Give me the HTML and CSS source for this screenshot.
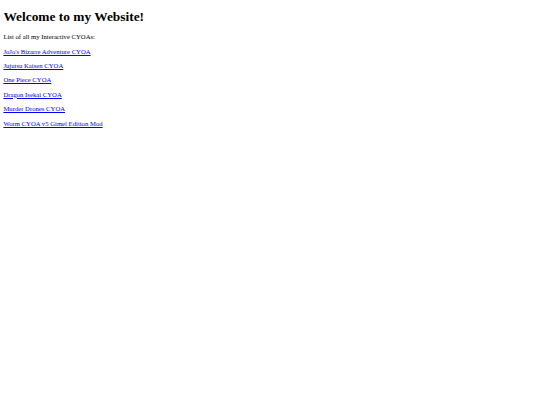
FILE: index.html
```html
<!DOCTYPE html>
<html>
<head>
<meta charset="utf-8">
<title>Welcome</title>
<link rel="stylesheet" href="styles.css">
</head>
<body class="page">
<h1 class="title">Welcome to my Website!</h1>
<p class="line">List of all my Interactive CYOAs:</p>
<p class="line"><a class="link" href="#">JoJo's Bizarre Adventure CYOA</a></p>
<p class="line"><a class="link" href="#">Jujutsu Kaisen CYOA</a></p>
<p class="line"><a class="link" href="#">One Piece CYOA</a></p>
<p class="line"><a class="link" href="#">Dragon Isekai CYOA</a></p>
<p class="line"><a class="link" href="#">Murder Drones CYOA</a></p>
<p class="line"><a class="link" href="#">Worm CYOA v5 Gimel Edition Mod</a></p>
</body>
</html>
```
FILE: styles.css
```css
html, body {
  background: #ffffff;
}
.page {
  margin: 3.4px;
  font-family: "Liberation Serif", "Times New Roman", serif;
  font-size: 6.7px;
  color: #000000;
}
.title {
  font-size: 13.4px;
  font-weight: bold;
  margin: 5.5px 0 9px;
  line-height: 1.15;
}
.line {
  margin: 6.7px 0;
  line-height: 7.7px;
}
.link {
  color: #0000ee;
  text-decoration: underline;
}
```
